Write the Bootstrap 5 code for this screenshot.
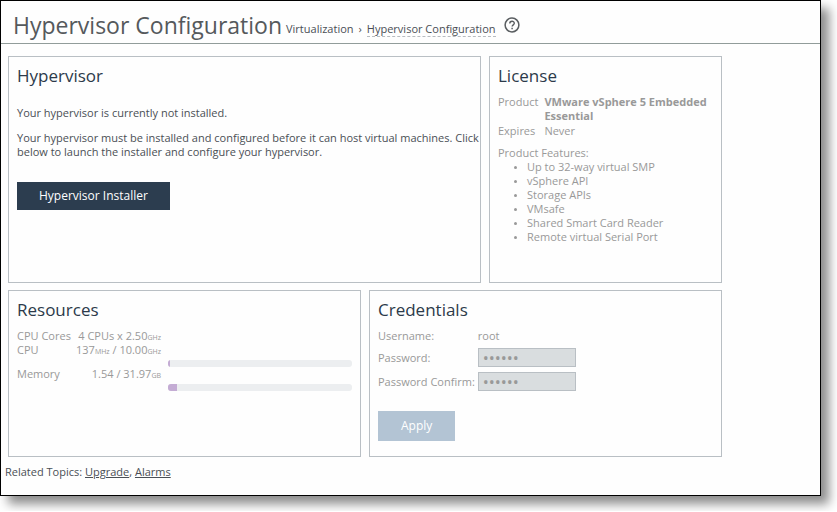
<!DOCTYPE html>
<html lang="en">
<head>
<meta charset="utf-8">
<meta name="viewport" content="width=device-width, initial-scale=1">
<title>Hypervisor Configuration</title>
<link href="https://cdn.jsdelivr.net/npm/bootstrap@5.3.0/dist/css/bootstrap.min.css" rel="stylesheet">
<style>
body { font: 11px/14px "Open Sans", "Noto Sans", sans-serif; color: #4a4f55; background: #fff; }
a, a:hover { color: inherit; }
.app-frame { margin: 0 16px 15px 0; border: 1px solid #000; background: #fefefe; box-shadow: 8px 8px 10px rgba(0, 0, 0, .45); }
.page-head { height: 43px; padding: 6px 12px 0; border-bottom: 1px solid #919c9a; }
.page-head h1 { font-size: 23px; line-height: 36px; font-weight: 400; color: #55595c; }
.crumb-nav { padding: 15px 8px 0 4px; }
.crumbs { --bs-breadcrumb-divider: "›"; --bs-breadcrumb-item-padding-x: 5px; --bs-breadcrumb-divider-color: #4a4f55; --bs-breadcrumb-item-active-color: #4a4f55; --bs-breadcrumb-font-size: 11px; }
.crumbs a { display: inline-block; border-bottom: 1px dashed #b8bcc0; }
.help { padding-top: 10px; }
.panels { max-width: 728px; padding: 12px 7px 0; }
.top-row { display: grid; grid-template-columns: 473fr 233fr; min-height: 227px; }
.bottom-row { display: grid; grid-template-columns: 1fr 1fr; min-height: 167px; }
.panels, .top-row, .bottom-row { gap: 7px 8px; }
.panel { --bs-card-border-radius: 0; --bs-card-border-color: #b9bfc4; --bs-card-bg: #fefefe; --bs-card-color: inherit; padding: 8px; }
.panel h2 { font-size: 17px; line-height: 22px; font-weight: 400; color: #2c3a4a; margin-bottom: 8px; }
.muted { color: #999; }
.intro { margin: 11px 0; }
.steps { margin: 0 -8px 23px 0; }
.action { --bs-btn-border-radius: 0; --bs-btn-border-width: 0; --bs-btn-font-size: 12px; --bs-btn-line-height: 20px; --bs-btn-padding-x: 22px; --bs-btn-padding-y: 4px; --bs-btn-color: #fff; --bs-btn-bg: #2c3d4f; --bs-btn-hover-color: #fff; --bs-btn-hover-bg: #374b60; --bs-btn-active-bg: #22303f; --bs-btn-active-color: #fff; --bs-btn-disabled-bg: #b3c4d4; --bs-btn-disabled-color: #fff; --bs-btn-disabled-opacity: 1; }
.apply { --bs-btn-padding-x: 23px; --bs-btn-padding-y: 5px; margin-top: 20px; }
.facts { display: grid; grid-template-columns: auto 1fr; gap: 1px 6px; }
.facts dt { font-weight: 400; }
.features { padding-left: 29px; }
.features li::marker { font-size: 8px; }
.usage td, .usage th { padding: 0; font-weight: 400; }
.usage th { width: 59px; }
.usage td.amount { width: 85px; text-align: right; }
.usage small { font-size: 7px; line-height: 0; }
.meter { --bs-progress-height: 7px; --bs-progress-border-radius: 3px; --bs-progress-bg: #eceef0; --bs-progress-bar-bg: #c4acd4; margin: 17px 0 0 7px; }
.creds { display: grid; grid-template-columns: auto 98px; gap: 5px 3px; justify-content: start; align-items: center; }
.creds .form-control { height: 19px; min-height: 0; padding: 0 4px; border-radius: 0; border-color: #b9bfc4; background: #d9dddf; color: #999; font-size: 16px; line-height: 17px; }
.related { padding: 8px 4px 16px; }
</style>
<script src="https://cdn.jsdelivr.net/npm/bootstrap@5.3.0/dist/js/bootstrap.bundle.min.js"></script>
</head>
<body>
<div class="app-frame">
  <header class="page-head d-flex align-items-start">
    <h1 class="mb-0">Hypervisor Configuration</h1>
    <nav aria-label="Breadcrumb" class="crumb-nav">
      <ol class="breadcrumb crumbs mb-0">
        <li class="breadcrumb-item">Virtualization</li>
        <li class="breadcrumb-item active" aria-current="page"><a href="#" class="text-decoration-none">Hypervisor Configuration</a></li>
      </ol>
    </nav>
    <a href="#" class="help d-block" aria-label="Help">
      <svg class="d-block" width="16" height="16" viewBox="0 0 16 16" fill="none" stroke="#5a5e61" aria-hidden="true"><circle cx="8" cy="8" r="6.9" stroke-width="1.5"/><path d="M5.8 6.4c0-2.9 4.5-2.8 4.5-.2 0 1.6-2.2 1.7-2.2 3.4" stroke-width="1.4"/><path d="M8.1 10.7v1.5" stroke-width="1.5"/></svg>
    </a>
  </header>
  <main class="panels d-flex flex-column">
    <div class="top-row">
      <section class="card panel">
        <h2>Hypervisor</h2>
        <p class="intro">Your hypervisor is currently not installed.</p>
        <p class="steps">Your hypervisor must be installed and configured before it can host virtual machines. Click below to launch the installer and configure your hypervisor.</p>
        <div><button type="button" class="btn action">Hypervisor Installer</button></div>
      </section>
      <section class="card panel">
        <h2>License</h2>
        <div class="muted">
          <dl class="facts mb-2">
            <dt>Product</dt><dd class="mb-0 fw-bold">VMware vSphere 5 Embedded Essential</dd>
            <dt>Expires</dt><dd class="mb-0">Never</dd>
          </dl>
          <div>Product Features:</div>
          <ul class="features mb-0">
            <li>Up to 32-way virtual SMP</li>
            <li>vSphere API</li>
            <li>Storage APIs</li>
            <li>VMsafe</li>
            <li>Shared Smart Card Reader</li>
            <li>Remote virtual Serial Port</li>
          </ul>
        </div>
      </section>
    </div>
    <div class="bottom-row">
      <section class="card panel">
        <h2>Resources</h2>
        <table class="usage muted w-100">
          <tbody class="align-top">
            <tr><th scope="row">CPU Cores</th><td class="amount">4 CPUs x 2.50<small>GHz</small></td><td></td></tr>
            <tr><th scope="row">CPU</th><td class="amount">137<small>MHz</small> / 10.00<small>GHz</small></td><td><div class="progress meter" role="progressbar" aria-label="CPU" aria-valuenow="1" aria-valuemin="0" aria-valuemax="100"><div class="progress-bar" style="width:1%"></div></div></td></tr>
            <tr><th scope="row">Memory</th><td class="amount">1.54 / 31.97<small>GB</small></td><td><div class="progress meter" role="progressbar" aria-label="Memory" aria-valuenow="5" aria-valuemin="0" aria-valuemax="100"><div class="progress-bar" style="width:5%"></div></div></td></tr>
          </tbody>
        </table>
      </section>
      <section class="card panel">
        <h2>Credentials</h2>
        <form class="muted">
          <div class="creds">
            <span>Username:</span><span>root</span>
            <label for="pw">Password:</label><input id="pw" type="password" class="form-control" value="secret" disabled>
            <label for="pw2">Password Confirm:</label><input id="pw2" type="password" class="form-control" value="secret" disabled>
          </div>
          <button type="submit" class="btn action apply" disabled>Apply</button>
        </form>
      </section>
    </div>
  </main>
  <footer class="related">Related Topics: <a href="#">Upgrade</a>, <a href="#">Alarms</a></footer>
</div>
</body>
</html>
